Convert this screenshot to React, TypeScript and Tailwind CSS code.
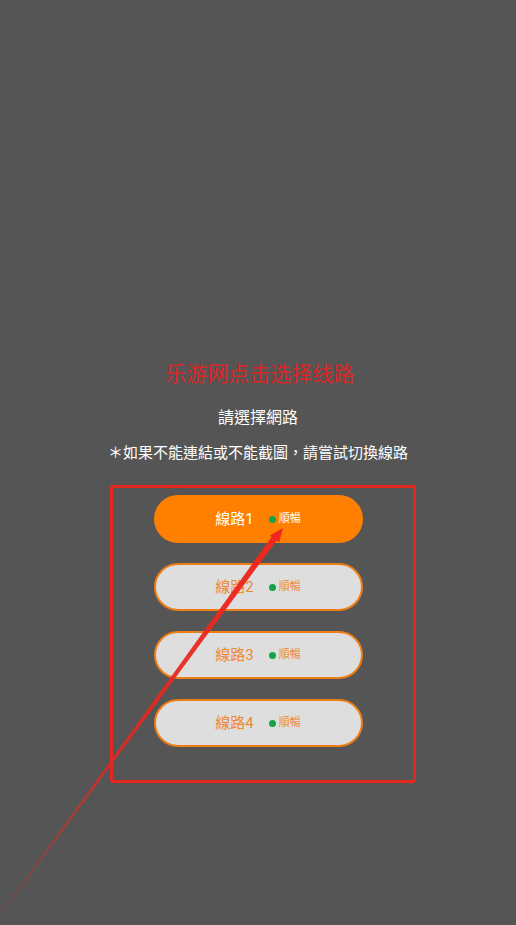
import React from "react";

const lines = ["線路1", "線路2", "線路3", "線路4"];

function LineButton({ label, active }: { label: string; active: boolean }) {
  return (
    <button
      className={
        active
          ? "flex h-[48px] w-[209px] items-center justify-center rounded-full border-2 border-[#ff8000] bg-[#ff8000] text-white"
          : "flex h-[48px] w-[209px] items-center justify-center rounded-full border-2 border-[#ee7d16] bg-[#dedede] text-[#ee8a2e]"
      }
    >
      <span className="text-[15px] leading-[20px]">{label}</span>
      <span className="ml-[15px] h-[7px] w-[7px] rounded-full bg-[#14a34a]" />
      <span className="ml-[3px] text-[11px] leading-[16px]">順暢</span>
    </button>
  );
}

export default function App() {
  return (
    <div
      className="relative h-[925px] w-full overflow-hidden bg-[#555555]"
      style={{ fontFamily: 'Roboto, "Noto Sans CJK TC", "Noto Sans CJK SC", sans-serif' }}
    >
      <div className="flex flex-col items-center pt-[358px]">
        <p
          className="pl-[4px] text-[21px] leading-[28px] text-[#dc2626]"
          style={{ fontFamily: '"Noto Sans CJK SC", sans-serif' }}
        >
          乐游网点击选择线路
        </p>
        <p className="mt-[20px] text-[16px] leading-[24px] text-white">請選擇網路</p>
        <p className="mt-[12px] text-[15px] leading-[22px] text-white">＊如果不能連結或不能截圖，請嘗試切換線路</p>

        <div className="mt-[31px] flex flex-col items-center gap-[20px]">
          {lines.map((l, i) => (
            <LineButton key={l} label={l} active={i === 0} />
          ))}
        </div>
      </div>

      {/* annotation box */}
      <div className="pointer-events-none absolute left-[110px] top-[485px] h-[298px] w-[306px] rounded-[3px] border-[3px] border-[#e3281f]" />

      {/* annotation arrow */}
      <svg className="pointer-events-none absolute left-0 top-0" width="516" height="925" viewBox="0 0 516 925">
        <defs>
          <linearGradient id="fade" x1="0" y1="915" x2="283" y2="528" gradientUnits="userSpaceOnUse">
            <stop offset="0" stopColor="#e3281f" stopOpacity="0.25" />
            <stop offset="0.45" stopColor="#e3281f" stopOpacity="0.9" />
            <stop offset="1" stopColor="#f0281f" stopOpacity="1" />
          </linearGradient>
        </defs>
        <polygon points="-0.4,914.7 0.4,915.3 276.8,540.2 272.0,536.6" fill="url(#fade)" />
        <polygon points="283,528 279.2,542.6 269.8,535.6" fill="#f0281f" />
      </svg>
    </div>
  );
}
